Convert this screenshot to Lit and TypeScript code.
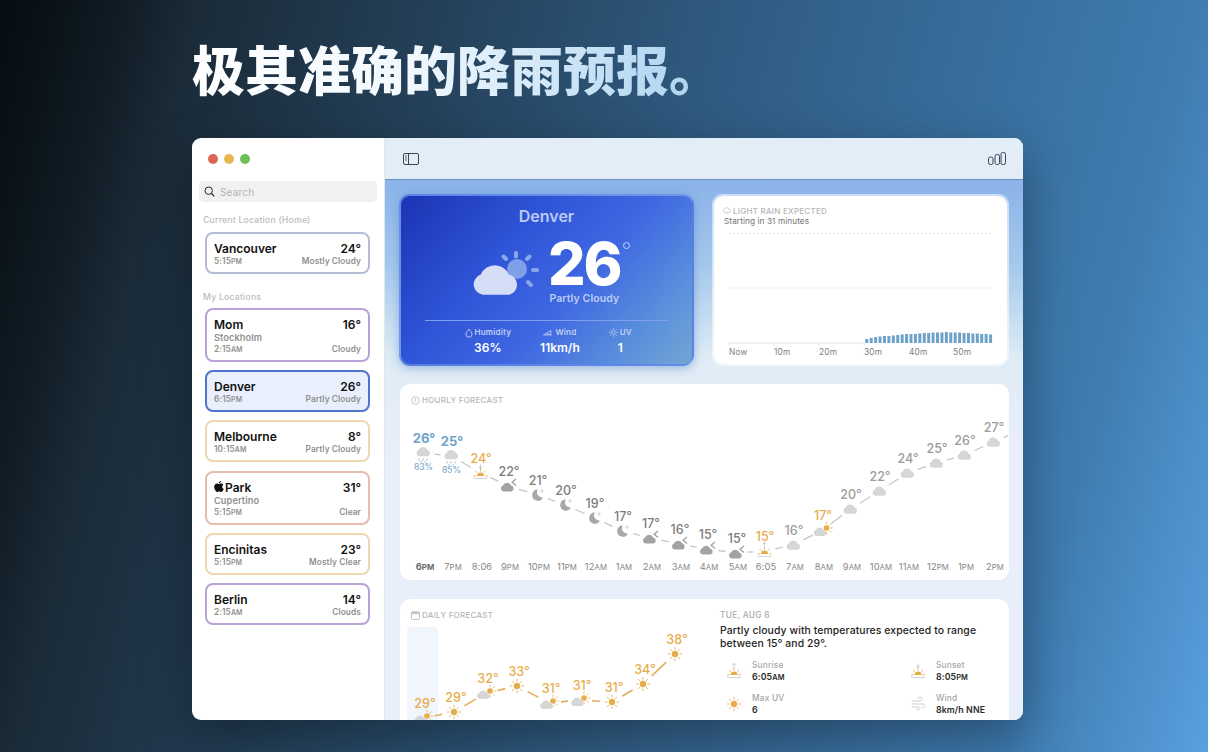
import { LitElement, html, svg, css } from 'lit';
import { customElement } from 'lit/decorators.js';

const SUN = '#e6ad4c';
const CLOUD_PATH = 'M-4.2 5A3.4 3.4 0 0 1-5-1.6A5 5 0 0 1 4.2-1.6A3.4 3.4 0 0 1 4.4 5Z';

const cloud = (x: number, y: number, s = 0.95, color = '#d6d6d6') =>
  svg`<path d=${CLOUD_PATH} transform="translate(${x} ${y}) scale(${s})" fill=${color}></path>`;

const rays = (x: number, y: number, r1: number, r2: number, from = 0, to = 360, width = 0.9, color = SUN) => {
  const out = [];
  for (let a = from; a < to; a += 45) {
    const t = (a * Math.PI) / 180;
    out.push(svg`<line x1=${x + r1 * Math.cos(t)} y1=${y + r1 * Math.sin(t)} x2=${x + r2 * Math.cos(t)} y2=${y + r2 * Math.sin(t)} stroke=${color} stroke-width=${width} stroke-linecap="round"></line>`);
  }
  return out;
};

const sun = (x: number, y: number) =>
  svg`<circle cx=${x} cy=${y} r="3.2" fill=${SUN}></circle>${rays(x, y, 4.9, 6.6)}`;

const sunCloud = (x: number, y: number) => svg`
  <circle cx=${x + 4} cy=${y - 2} r="2.8" fill=${SUN}></circle>${rays(x + 4, y - 2, 4.2, 6, -90, 135, 0.8)}
  ${cloud(x - 2.5, y + 1.5, 0.88)}`;

const moon = (x: number, y: number) => svg`
  <path transform="translate(${x} ${y})" d="M.5-5.5A5.6 5.6 0 1 0 5.4 2.4A5 5 0 0 1 .5-5.5Z" fill="#a8a8a8"></path>
  <path transform="translate(${x + 4.5} ${y - 4})" d="M0-2V2M-2 0H2" stroke="#c8c8c8" stroke-width=".7"></path>`;

const cloudMoon = (x: number, y: number) => svg`
  <path transform="translate(${x + 5} ${y - 4})" d="M2.5-3L-1.4 0.2L2.6 3.4" fill="none" stroke="#a0a0a0" stroke-width="1.3"></path>
  ${cloud(x - 1, y + 1, 0.9, '#a3a3a3')}`;

const horizonSun = (x: number, y: number, up: boolean) => svg`
  <path d="M${x - 3.6} ${y + 3}a3.6 3.6 0 0 1 7.2 0Z" fill=${SUN}></path>
  ${rays(x, y + 3, 5, 6.8, 180, 361)}
  <line x1=${x - 7} y1=${y + 5.5} x2=${x + 7} y2=${y + 5.5} stroke="#d4d4d4" stroke-width="1"></line>
  <path d=${up
    ? `M${x} ${y - 4.5}V${y - 8.5}M${x - 1.6} ${y - 6.8}L${x} ${y - 8.6}L${x + 1.6} ${y - 6.8}`
    : `M${x} ${y - 8.5}V${y - 4.5}M${x - 1.6} ${y - 6.2}L${x} ${y - 4.4}L${x + 1.6} ${y - 6.2}`}
    fill="none" stroke="#bdbdbd" stroke-width=".8"></path>`;

const rainCloud = (x: number, y: number) => svg`
  ${cloud(x, y - 1.5)}
  <path d="M${x - 4} ${y + 5.5}l-1 2M${x} ${y + 5.5}l-1 2M${x + 4} ${y + 5.5}l-1 2M${x - 2} ${y + 8}l-.8 1.6M${x + 2} ${y + 8}l-.8 1.6"
    stroke="#7ba8cf" stroke-width=".8" fill="none"></path>`;

const ICONS: Record<string, (x: number, y: number) => unknown> = {
  rain: rainCloud,
  cloud: (x, y) => cloud(x, y),
  moon,
  cloudMoon,
  set: (x, y) => horizonSun(x, y, false),
  rise: (x, y) => horizonSun(x, y, true),
  sunCloud,
  sun,
};

const connector = (a: number[], b: number[], gap: number, color: string, width: number) => {
  const dx = b[0] - a[0];
  const dy = b[1] - a[1];
  const len = Math.hypot(dx, dy);
  const ux = dx / len;
  const uy = dy / len;
  return svg`<line x1=${a[0] + ux * gap} y1=${a[1] + uy * gap} x2=${b[0] - ux * gap} y2=${b[1] - uy * gap} stroke=${color} stroke-width=${width}></line>`;
};

const BLUE = '#6fa3cc';
const GREY = '#7d7d7d';
const LIGHT = '#9c9c9c';

// x, icon y, temp, label, suffix, icon, temp colour
const HOURS: [number, number, string, string, string, string, string][] = [
  [425, 453, '26°', '6', 'PM', 'rain', BLUE],
  [453, 456, '25°', '7', 'PM', 'rain', BLUE],
  [482, 473, '24°', '8:06', '', 'set', SUN],
  [510, 486, '22°', '9', 'PM', 'cloudMoon', GREY],
  [539, 495, '21°', '10', 'PM', 'moon', GREY],
  [567, 505, '20°', '11', 'PM', 'moon', GREY],
  [596, 518, '19°', '12', 'AM', 'moon', GREY],
  [624, 531, '17°', '1', 'AM', 'moon', GREY],
  [652, 538, '17°', '2', 'AM', 'cloudMoon', GREY],
  [681, 544, '16°', '3', 'AM', 'cloudMoon', GREY],
  [709, 549, '15°', '4', 'AM', 'cloudMoon', GREY],
  [738, 553, '15°', '5', 'AM', 'cloudMoon', GREY],
  [766, 551, '15°', '6:05', '', 'rise', SUN],
  [795, 545, '16°', '7', 'AM', 'cloud', LIGHT],
  [824, 530, '17°', '8', 'AM', 'sunCloud', SUN],
  [852, 509, '20°', '9', 'AM', 'cloud', LIGHT],
  [881, 491, '22°', '10', 'AM', 'cloud', LIGHT],
  [909, 473, '24°', '11', 'AM', 'cloud', LIGHT],
  [938, 463, '25°', '12', 'PM', 'cloud', LIGHT],
  [966, 455, '26°', '1', 'PM', 'cloud', LIGHT],
  [995, 442, '27°', '2', 'PM', 'cloud', LIGHT],
];

const DAYS: [number, number, string, string][] = [
  [423, 718, '29°', 'sunCloud'],
  [454, 712, '29°', 'sun'],
  [486, 693, '32°', 'sunCloud'],
  [517, 686, '33°', 'sun'],
  [549, 703, '31°', 'sunCloud'],
  [580, 700, '31°', 'sunCloud'],
  [612, 702, '31°', 'sun'],
  [643, 684, '34°', 'sun'],
  [675, 654, '38°', 'sun'],
];

const LOCATIONS = [
  { name: 'Mom', city: 'Stockholm', time: '2:15', ap: 'AM', temp: '16°', cond: 'Cloudy', color: '#b9a2d9' },
  { name: 'Denver', time: '6:15', ap: 'PM', temp: '26°', cond: 'Partly Cloudy', color: '#4f74cf', active: true },
  { name: 'Melbourne', time: '10:15', ap: 'AM', temp: '8°', cond: 'Partly Cloudy', color: '#efd7b2' },
  { name: 'Park', apple: true, city: 'Cupertino', time: '5:15', ap: 'PM', temp: '31°', cond: 'Clear', color: '#e8bcac' },
  { name: 'Encinitas', time: '5:15', ap: 'PM', temp: '23°', cond: 'Mostly Clear', color: '#efd7b2' },
  { name: 'Berlin', time: '2:15', ap: 'AM', temp: '14°', cond: 'Clouds', color: '#b9a2d9' },
];

const BAR_HEIGHTS = [4, 5, 6, 6.5, 7, 7, 7.5, 8, 8.5, 9, 9, 9, 9.5, 10, 10, 10.5, 10.5, 10.5, 11, 10.5, 10.5, 10.5, 10, 10, 9.5, 9.5, 9, 9, 8.5];

@customElement('app-root')
export class AppRoot extends LitElement {
  static styles = css`
    :host {
      display: block;
      width: 1208px;
      height: 752px;
      overflow: hidden;
      padding: 42px 0 0 192px;
      box-sizing: border-box;
      font-family: Inter, 'Noto Sans CJK SC', sans-serif;
      background: linear-gradient(104deg, #060c11 0%, #0f1a22 8%, #1a2a37 14%, #2f5a80 52%, #3f7cb1 86%, #58a0df 100%);
    }
    h1 {
      margin: 0;
      font: 900 53px/60px Inter, 'Noto Sans CJK SC', sans-serif;
      width: max-content;
      background: linear-gradient(90deg, #ffffff 0%, #f2f9fe 40%, #a9d1ef 100%);
      -webkit-background-clip: text;
      background-clip: text;
      color: transparent;
    }
    .window {
      margin-top: 36px;
      width: 831px;
      height: 582px;
      display: flex;
      border-radius: 9px;
      overflow: hidden;
      background: #fff;
      box-shadow: 0 18px 50px rgba(0, 0, 0, 0.35);
    }
    .sidebar {
      width: 193px;
      flex: none;
      box-sizing: border-box;
      border-right: 1px solid #e3e6ea;
      padding: 16px 7px 0;
    }
    .lights { display: flex; gap: 6px; padding-left: 9px; }
    .lights i { width: 10px; height: 10px; border-radius: 50%; }
    .search {
      margin-top: 17px;
      height: 21px;
      border-radius: 5px;
      background: #f1f1f1;
      display: flex;
      align-items: center;
      gap: 5px;
      padding-left: 5px;
      font-size: 10px;
      letter-spacing: 0.2px;
      color: #b4b4b4;
    }
    .section {
      margin: 13px 0 6px 4px;
      font-size: 8.7px;
      line-height: 11px;
      letter-spacing: 0.2px;
      color: #bcbcbc;
      font-weight: 500;
    }
    .section.mine { margin-top: 18px; margin-bottom: 5px; }
    .cards { display: flex; flex-direction: column; gap: 8.2px; }
    .card {
      margin: 0 7px 0 6px;
      box-sizing: border-box;
      border: 2px solid;
      border-radius: 8px;
      padding: 7px 7px 5px;
      background: #fff;
    }
    .card.active { background: #e9effc; }
    .row { display: flex; justify-content: space-between; align-items: center; }
    .name, .temp {
      font-size: 12px;
      line-height: 15px;
      font-weight: 600;
      color: #111;
      display: flex;
      align-items: center;
      gap: 1px;
    }
    .sub, .city {
      font-size: 8.3px;
      line-height: 11px;
      font-weight: 600;
      color: #8f8f8f;
      letter-spacing: 0.1px;
    }
    .city { font-size: 9.2px; line-height: 12px; }
    small { font-size: 0.84em; }
    .main {
      flex: 1;
      min-width: 0;
      display: flex;
      flex-direction: column;
      background: linear-gradient(180deg, #7da8e8 0%, #a5c9ec 22%, #dfecf5 38%, #e9eefb 55%);
    }
    .toolbar {
      height: 42px;
      flex: none;
      box-sizing: border-box;
      background: #e3edf7;
      border-bottom: 1px solid #6d93c4;
      display: flex;
      align-items: center;
      justify-content: space-between;
      padding: 0 17px 0 18px;
    }
    .content {
      padding: 14px 13px 0 14px;
      display: flex;
      flex-direction: column;
      gap: 18px;
    }
    .top { display: grid; grid-template-columns: 295px 297px; gap: 18px; height: 172px; }
    .hero {
      box-sizing: border-box;
      border: 2px solid rgba(110, 150, 235, 0.75);
      border-radius: 11px;
      background: linear-gradient(132deg, #1a34b4 0%, #3055d8 35%, #3f67e2 58%, #5a8fdc 82%, #74a6d4 100%);
      box-shadow: 0 2px 10px rgba(80, 130, 210, 0.5);
      color: #fff;
      display: flex;
      flex-direction: column;
      align-items: center;
      padding-top: 10px;
    }
    .hero h2 {
      margin: 0;
      font-size: 16px;
      line-height: 20px;
      font-weight: 600;
      color: #bccbf6;
    }
    .now {
      display: flex;
      align-items: flex-start;
      margin-top: 7px;
      height: 72px;
      width: 100%;
      padding-left: 69px;
      box-sizing: border-box;
      gap: 8px;
    }
    .now svg { margin-top: 14.5px; flex: none; }
    .reading { display: flex; flex-direction: column; align-items: center; position: relative; padding-top: 2px; }
    .big { font-size: 59px; line-height: 58px; font-weight: 800; letter-spacing: -2px; color: #fff; }
    .deg {
      position: absolute;
      top: 9px;
      right: -9px;
      width: 5px;
      height: 5px;
      border: 1px solid #c5d3f8;
      border-radius: 50%;
    }
    .cond { font-size: 10.5px; line-height: 12px; font-weight: 600; color: #bccbf6; letter-spacing: 0.1px; }
    .stats {
      width: 244px;
      margin-top: 15px;
      border-top: 1px solid #7f9fef;
      display: flex;
      gap: 29px;
      padding: 6px 0 0 40px;
      box-sizing: border-box;
    }
    .stat { display: flex; flex-direction: column; align-items: center; }
    .stat span {
      font-size: 8px;
      line-height: 11px;
      font-weight: 600;
      color: #c2d0f7;
      display: flex;
      align-items: center;
      gap: 2px;
      letter-spacing: 0.2px;
    }
    .stat b { font-size: 12px; line-height: 19px; font-weight: 600; color: #fff; }
    .panel {
      background: #fff;
      border-radius: 11px;
      box-sizing: border-box;
    }
    .rain {
      border: 2px solid rgba(255, 255, 255, 0.55);
      background-clip: padding-box;
      padding: 10px 0 0;
      display: flex;
      flex-direction: column;
    }
    .label {
      font-size: 8px;
      line-height: 10px;
      letter-spacing: 0.25px;
      color: #b6b6b6;
      font-weight: 500;
      display: flex;
      align-items: center;
      gap: 2px;
    }
    .rain .label { padding-left: 9px; }
    .starting { padding-left: 10px; font-size: 8.2px; line-height: 11px; letter-spacing: 0.1px; color: #727272; }
    .chart { display: block; flex: none; }
    .rain .chart { margin-top: 1px; }
    .axis { font: 8.3px Inter, sans-serif; fill: #7d7d7d; letter-spacing: 0.2px; }
    .hourly { margin: 0 1px; height: 196px; border-radius: 10px; padding-top: 11px; }
    .hourly .label, .daily .label { padding-left: 11px; }
    .hourly .chart { margin-top: 5px; }
    .t { font: 500 12.5px Inter, sans-serif; text-anchor: middle; }
    .t.blue { font-weight: 700; font-size: 13px; }
    .pct { font: 500 8.5px Inter, sans-serif; fill: #7ba8cf; text-anchor: middle; }
    .hr { font: 400 9.3px Inter, sans-serif; fill: #868686; text-anchor: middle; letter-spacing: 0.1px; }
    .hr.first { font-weight: 700; fill: #6a6a6a; }
    .hr tspan { font-size: 7.8px; }
    .daily { margin: 1px 1px 0; height: 130px; display: flex; border-radius: 11px 11px 0 0; }
    .dleft { width: 320px; flex: none; padding-top: 11px; }
    .dleft .chart { margin-top: 7px; }
    .dright { flex: 1; padding-top: 11px; }
    .date { font-size: 8.3px; line-height: 10px; letter-spacing: 0.3px; color: #ababab; font-weight: 500; }
    .dright p {
      margin: 4px 0 0;
      font-size: 10.4px;
      line-height: 13px;
      font-weight: 500;
      color: #232323;
      letter-spacing: 0.1px;
    }
    .facts {
      margin-top: 10px;
      display: grid;
      grid-template-columns: 184px 1fr;
      row-gap: 10px;
      padding-left: 6px;
    }
    .fact { display: flex; align-items: center; gap: 10px; }
    .fact svg { flex: none; }
    .fact span { display: block; font-size: 8.3px; line-height: 11px; color: #a6a6a6; font-weight: 500; letter-spacing: 0.2px; }
    .fact b { display: block; font-size: 8.8px; line-height: 11px; font-weight: 600; color: #2a2a2a; letter-spacing: 0.1px; }
  `;

  private location(l: any) {
    return html`
      <div class="card ${l.active ? 'active' : ''}" style="border-color:${l.color}">
        <div class="row">
          <div class="name">
            ${l.apple
              ? html`<svg width="10" height="12" viewBox="0 0 10 12"><path fill="#111" d="M7 0c.1.9-.7 2.3-2.1 2.3C4.800 1.200 5.800.1 7 0ZM5 3c.6 0 1.200-.5 2.200-.5.8 0 1.700.4 2.200 1.200-1.800 1-1.500 3.500.4 4.200-.5 1.400-1.500 3.100-2.600 3.100-.7 0-1-.5-1.900-.5s-1.200.5-1.900.5C2 11 .2 8.300.2 6 .2 3.800 1.600 2.600 3 2.600 3.800 2.600 4.500 3 5 3Z"></path></svg>`
              : ''}${l.name}
          </div>
          <div class="temp">${l.temp}</div>
        </div>
        ${l.city ? html`<div class="city">${l.city}</div>` : ''}
        <div class="row">
          <div class="sub">${l.time}<small>${l.ap}</small></div>
          <div class="sub">${l.cond}</div>
        </div>
      </div>
    `;
  }

  private hero() {
    return html`
      <div class="hero">
        <h2>Denver</h2>
        <div class="now">
          <svg width="70" height="50" viewBox="470 248 70 50">
            <circle cx="517" cy="269" r="10" fill="#7f9fe9"></circle>
            ${[[516, 253, 516, 256.5], [503.5, 256.5, 506, 259], [529.5, 256.5, 527, 259], [533, 270, 537, 270], [528, 282, 531, 285]].map(
              (r) => svg`<line x1=${r[0]} y1=${r[1]} x2=${r[2]} y2=${r[3]} stroke="#8aa7ea" stroke-width="4" stroke-linecap="round"></line>`
            )}
            ${cloud(496, 279.5, 3.05, '#d6def7')}
          </svg>
          <div class="reading">
            <div class="big">26<i class="deg"></i></div>
            <div class="cond">Partly Cloudy</div>
          </div>
        </div>
        <div class="stats">
          <div class="stat">
            <span><svg width="8" height="10" viewBox="0 0 8 10"><path d="M4 1C5.5 3 7 4.3 7 6.2A3 3 0 0 1 1 6.2C1 4.3 2.5 3 4 1Z" fill="none" stroke="#c2d0f7" stroke-width=".9"></path></svg>Humidity</span>
            <b>36%</b>
          </div>
          <div class="stat">
            <span><svg width="10" height="8" viewBox="0 0 10 8"><path d="M.5 6L8 1.5 7.5 6ZM3 4.5L9 6" fill="none" stroke="#c2d0f7" stroke-width=".8"></path></svg>Wind</span>
            <b>11km/h</b>
          </div>
          <div class="stat">
            <span><svg width="9" height="9" viewBox="0 0 18 18"><circle cx="9" cy="9" r="3.5" fill="none" stroke="#c2d0f7" stroke-width="1.5"></circle>${rays(9, 9, 6, 8, 0, 360, 1.5, '#c2d0f7')}</svg>UV</span>
            <b>1</b>
          </div>
        </div>
      </div>
    `;
  }

  private rainCard() {
    return html`
      <div class="panel rain">
        <div class="label">
          <svg width="8" height="8" viewBox="-8 -6 16 16"><path d=${CLOUD_PATH} fill="none" stroke="#bbb" stroke-width="1.3"></path><path d="M-3 7l-1 2M1 7l-1 2" stroke="#bbb"></path></svg>
          LIGHT RAIN EXPECTED
        </div>
        <div class="starting">Starting in 31 minutes</div>
        <svg class="chart" width="293" height="132" viewBox="714 228 293 132">
          <line x1="729" y1="233.5" x2="992" y2="233.5" stroke="#e2e2e2" stroke-dasharray="2 2"></line>
          <line x1="729" y1="288" x2="992" y2="288" stroke="#e2e2e2" stroke-dasharray="2 2"></line>
          <line x1="729" y1="343" x2="864" y2="343" stroke="#e6e6e6"></line>
          ${[729, 774, 819, 864].map((x) => svg`<line x1=${x} x2=${x} y1="343" y2="345" stroke="#dedede"></line>`)}
          ${BAR_HEIGHTS.map(
            (h, i) => svg`<rect x=${865.3 + i * 4.42} y=${343 - h} width="3" height=${h} fill="#6fa2c9"></rect>`
          )}
          ${[['Now', 729], ['10m', 774], ['20m', 819], ['30m', 864], ['40m', 909], ['50m', 953]].map(
            (a) => svg`<text class="axis" x=${a[1]} y="355">${a[0]}</text>`
          )}
        </svg>
      </div>
    `;
  }

  private hourly() {
    const pts = HOURS.map((h) => [h[0] - 1.5, h[1]]);
    pts.push([1025, 428]);
    return html`
      <div class="panel hourly">
        <div class="label">
          <svg width="9" height="9" viewBox="0 0 10 10"><circle cx="5" cy="5" r="4.3" fill="none" stroke="#b6b6b6" stroke-width=".9"></circle><path d="M5 2.5V5.3L3.2 6.3" fill="none" stroke="#b6b6b6" stroke-width=".9"></path></svg>
          HOURLY FORECAST
        </div>
        <svg class="chart" width="608" height="170" viewBox="400 410 608 170">
          ${pts.slice(1).map((p, i) => connector(pts[i], p, 11, '#c6c6c6', 1.3))}
          ${HOURS.map((h, i) => svg`
            ${ICONS[h[5]](h[0] - 1.5, h[1])}
            <text class="t ${h[6] === BLUE ? 'blue' : ''}" x=${h[0] - 1} y=${h[1] - 10} fill=${h[6]}>${h[2]}</text>
            ${h[5] === 'rain' ? svg`<text class="pct" x=${h[0] - 1.5} y=${h[1] + 17}>${i === 0 ? '83%' : '85%'}</text>` : ''}
            <text class="hr ${i === 0 ? 'first' : ''}" x=${h[0]} y="570">${h[3]}<tspan>${h[4]}</tspan></text>
          `)}
        </svg>
      </div>
    `;
  }

  private daily() {
    const pts = DAYS.map((d) => [d[0], d[1]]);
    return html`
      <div class="panel daily">
        <div class="dleft">
          <div class="label">
            <svg width="9" height="9" viewBox="0 0 10 10"><rect x=".5" y="1" width="9" height="8.5" rx="1.5" fill="none" stroke="#b6b6b6"></rect><rect x=".5" y="1" width="9" height="2.5" fill="#c4c4c4"></rect></svg>
            DAILY FORECAST
          </div>
          <svg class="chart" width="320" height="100" viewBox="400 627 320 100">
            <rect x="407" y="627" width="31" height="110" rx="4" fill="#f1f5fc"></rect>
            ${pts.slice(1).map((p, i) => connector(pts[i], p, 12, '#e2b05a', 1.6))}
            ${DAYS.map((d) => svg`
              ${ICONS[d[3]](d[0], d[1])}
              <text class="t" x=${d[0] + 2} y=${d[1] - 10} fill=${SUN}>${d[2]}</text>
            `)}
          </svg>
        </div>
        <div class="dright">
          <div class="date">TUE, AUG 8</div>
          <p>Partly cloudy with temperatures expected to range<br />between 15° and 29°.</p>
          <div class="facts">
            <div class="fact">
              <svg width="16" height="18" viewBox="-8 -9 16 18">${horizonSun(0, 0, true)}</svg>
              <div><span>Sunrise</span><b>6:05<small>AM</small></b></div>
            </div>
            <div class="fact">
              <svg width="16" height="18" viewBox="-8 -9 16 18">${horizonSun(0, 0, false)}</svg>
              <div><span>Sunset</span><b>8:05<small>PM</small></b></div>
            </div>
            <div class="fact">
              <svg width="16" height="18" viewBox="-8 -9 16 18">${sun(0, 0)}</svg>
              <div><span>Max UV</span><b>6</b></div>
            </div>
            <div class="fact">
              <svg width="16" height="18" viewBox="-8 -9 16 18"><path d="M-6-3H2A2 2 0 1 0 0-5M-7 0H5A2 2 0 1 1 3 3M-6 3H0A1.5 1.5 0 1 1-1.5 5" fill="none" stroke="#c4c4c4" stroke-width=".8"></path></svg>
              <div><span>Wind</span><b>8km/h NNE</b></div>
            </div>
          </div>
        </div>
      </div>
    `;
  }

  render() {
    return html`
      <h1>极其准确的降雨预报。</h1>
      <div class="window">
        <aside class="sidebar">
          <div class="lights">
            <i style="background:#dc6458"></i><i style="background:#e8b850"></i><i style="background:#6dbf59"></i>
          </div>
          <div class="search">
            <svg width="11" height="11" viewBox="0 0 11 11"><circle cx="4.7" cy="4.7" r="3.7" fill="none" stroke="#222" stroke-width="1"></circle><line x1="7.5" y1="7.5" x2="10.3" y2="10.3" stroke="#222" stroke-width="1.2"></line></svg>
            Search
          </div>
          <div class="section">Current Location (Home)</div>
          ${this.location({ name: 'Vancouver', time: '5:15', ap: 'PM', temp: '24°', cond: 'Mostly Cloudy', color: '#b4bdd5' })}
          <div class="section mine">My Locations</div>
          <div class="cards">${LOCATIONS.map((l) => this.location(l))}</div>
        </aside>
        <div class="main">
          <div class="toolbar">
            <svg width="16" height="12" viewBox="0 0 16 12"><rect x=".5" y=".5" width="15" height="11" rx="1.5" fill="none" stroke="#3a4654"></rect><line x1="5.5" y1=".5" x2="5.5" y2="11.5" stroke="#3a4654"></line><path d="M2 3H4M2 5H4M2 7H4" stroke="#3a4654" stroke-width=".8"></path></svg>
            <svg width="18" height="13" viewBox="0 0 18 13"><rect x=".5" y="5" width="4.5" height="7.5" rx="1.8" fill="none" stroke="#3a4654"></rect><rect x="7" y="2.5" width="4.5" height="10" rx="1.8" fill="none" stroke="#3a4654"></rect><rect x="13" y=".5" width="4.5" height="12" rx="1.8" fill="none" stroke="#3a4654"></rect></svg>
          </div>
          <div class="content">
            <div class="top">${this.hero()}${this.rainCard()}</div>
            ${this.hourly()}
            ${this.daily()}
          </div>
        </div>
      </div>
    `;
  }
}
